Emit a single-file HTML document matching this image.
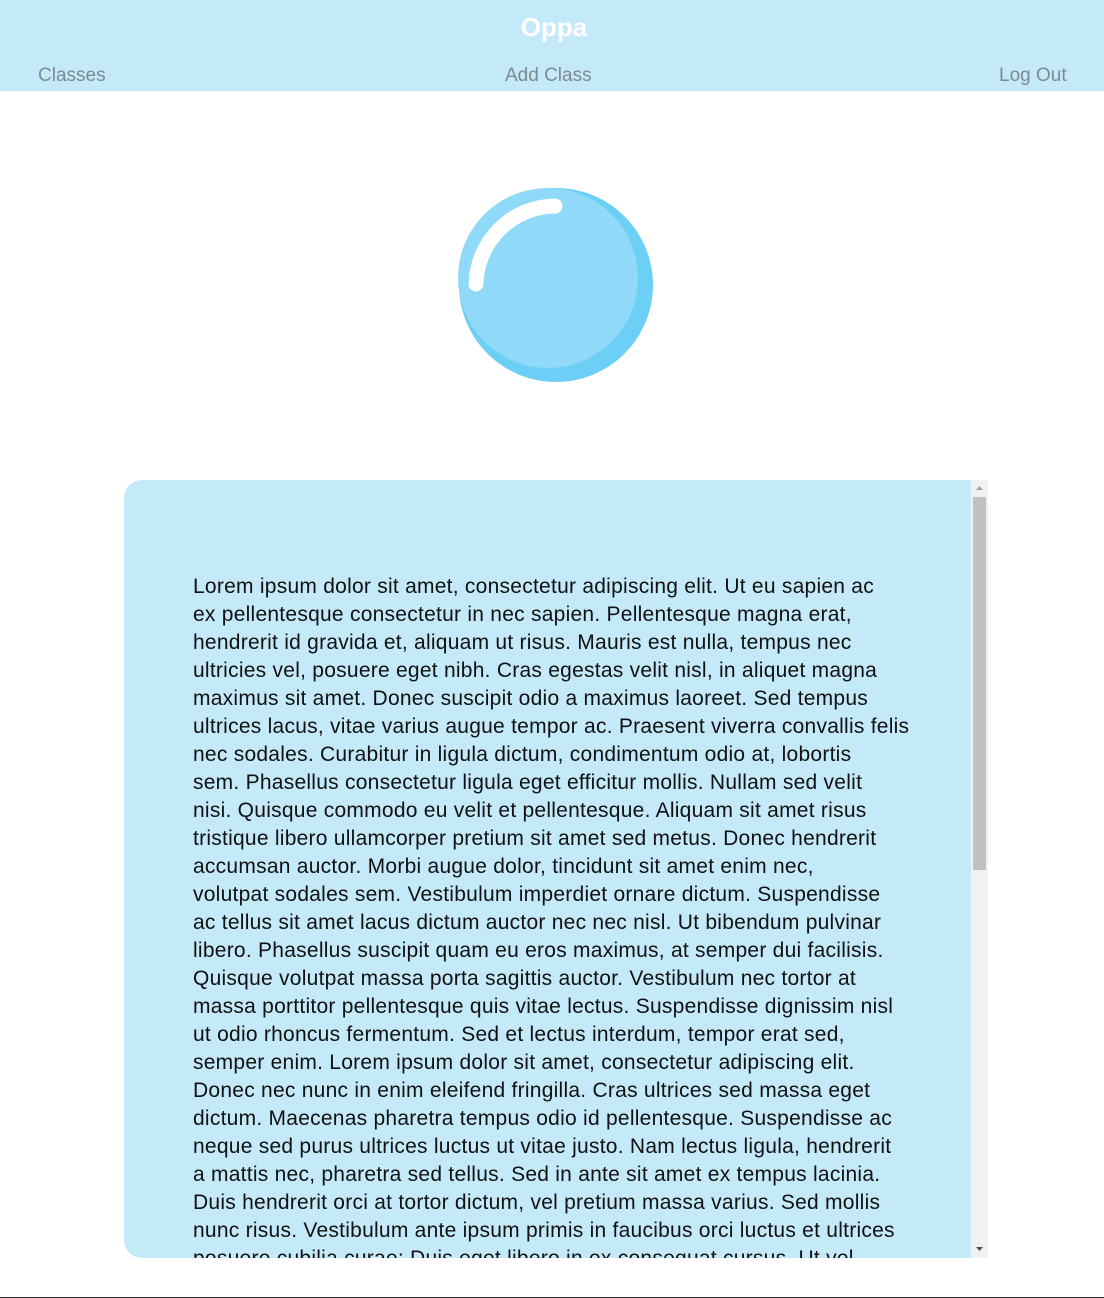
<!DOCTYPE html>
<html><head><meta charset="utf-8">
<style>
*{margin:0;padding:0;box-sizing:border-box}
html,body{width:1104px;height:1298px;overflow:hidden;background:#fff;font-family:"Liberation Sans",sans-serif}
.hdr{position:absolute;left:0;top:0;width:1104px;height:91px;background:#c4e9f9}
.title{position:absolute;top:12px;left:2px;width:1104px;text-align:center;color:#fff;font-weight:bold;font-size:26px}
.nav{position:absolute;top:65px;color:#7d8a90;font-size:19px}
.box{position:absolute;left:124px;top:480px;width:847px;height:778px;background:#c4e9f9;border-radius:18px 0 0 18px;overflow:hidden}
.txt{position:absolute;left:69px;top:93px;font-size:21px;line-height:28px;color:#111;white-space:nowrap;letter-spacing:0.25px}
.sb{position:absolute;left:971px;top:480px;width:17px;height:778px;background:#f1f1f1}
.thumb{position:absolute;left:2px;top:17px;width:13px;height:373px;background:#c1c1c1}
.bot{position:absolute;left:0;top:1297px;width:1104px;height:1px;background:#333}
</style></head><body>
<div class="hdr">
<div class="title">Oppa</div>
<div class="nav" style="left:38px">Classes</div>
<div class="nav" style="left:505px">Add Class</div>
<div class="nav" style="left:999px">Log Out</div>
</div>
<svg style="position:absolute;left:456px;top:186px" width="200" height="200" viewBox="0 0 200 200">
<circle cx="100" cy="99" r="97" fill="#6ccff5"/>
<circle cx="92" cy="92" r="90" fill="#90d9f8"/>
<path d="M20 98 A80 80 0 0 1 99 20" fill="none" stroke="#fff" stroke-width="15" stroke-linecap="round"/>
</svg>
<div class="box"><div class="txt">Lorem ipsum dolor sit amet, consectetur adipiscing elit. Ut eu sapien ac<br>ex pellentesque consectetur in nec sapien. Pellentesque magna erat,<br>hendrerit id gravida et, aliquam ut risus. Mauris est nulla, tempus nec<br>ultricies vel, posuere eget nibh. Cras egestas velit nisl, in aliquet magna<br>maximus sit amet. Donec suscipit odio a maximus laoreet. Sed tempus<br>ultrices lacus, vitae varius augue tempor ac. Praesent viverra convallis felis<br>nec sodales. Curabitur in ligula dictum, condimentum odio at, lobortis<br>sem. Phasellus consectetur ligula eget efficitur mollis. Nullam sed velit<br>nisi. Quisque commodo eu velit et pellentesque. Aliquam sit amet risus<br>tristique libero ullamcorper pretium sit amet sed metus. Donec hendrerit<br>accumsan auctor. Morbi augue dolor, tincidunt sit amet enim nec,<br>volutpat sodales sem. Vestibulum imperdiet ornare dictum. Suspendisse<br>ac tellus sit amet lacus dictum auctor nec nec nisl. Ut bibendum pulvinar<br>libero. Phasellus suscipit quam eu eros maximus, at semper dui facilisis.<br>Quisque volutpat massa porta sagittis auctor. Vestibulum nec tortor at<br>massa porttitor pellentesque quis vitae lectus. Suspendisse dignissim nisl<br>ut odio rhoncus fermentum. Sed et lectus interdum, tempor erat sed,<br>semper enim. Lorem ipsum dolor sit amet, consectetur adipiscing elit.<br>Donec nec nunc in enim eleifend fringilla. Cras ultrices sed massa eget<br>dictum. Maecenas pharetra tempus odio id pellentesque. Suspendisse ac<br>neque sed purus ultrices luctus ut vitae justo. Nam lectus ligula, hendrerit<br>a mattis nec, pharetra sed tellus. Sed in ante sit amet ex tempus lacinia.<br>Duis hendrerit orci at tortor dictum, vel pretium massa varius. Sed mollis<br>nunc risus. Vestibulum ante ipsum primis in faucibus orci luctus et ultrices<br>posuere cubilia curae; Duis eget libero in ex consequat cursus. Ut vel</div></div>
<div class="sb"><div class="thumb"></div>
<svg style="position:absolute;left:4px;top:5px" width="9" height="6"><path d="M4.5 1 L8 5 L1 5Z" fill="#a3a3a3"/></svg>
<svg style="position:absolute;left:4px;top:766px" width="9" height="6"><path d="M1 1 L8 1 L4.5 5Z" fill="#505050"/></svg>
</div>
<div class="bot"></div>
</body></html>
